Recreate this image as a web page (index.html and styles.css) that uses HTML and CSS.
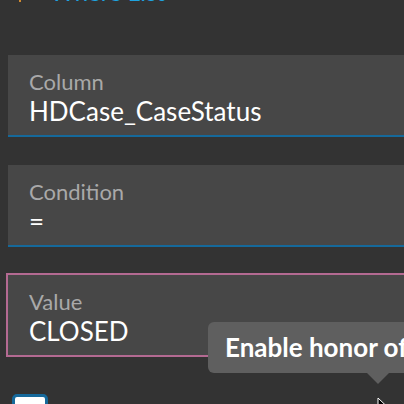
FILE: index.html
```html
<!DOCTYPE html>
<html>
<head>
<meta charset="utf-8">
<link rel="stylesheet" href="styles.css">
</head>
<body>
<div class="page">
  <div class="header">
    <span class="back"></span>
    <span class="title">Where List</span>
  </div>
  <div class="field">
    <div class="label">Column</div>
    <div class="value">HDCase_CaseStatus</div>
  </div>
  <div class="field">
    <div class="label">Condition</div>
    <div class="value">=</div>
  </div>
  <div class="field focused">
    <div class="label">Value</div>
    <div class="value">CLOSED</div>
  </div>
  <div class="check-row">
    <span class="checkbox"></span>
  </div>
</div>
<div class="tooltip">Enable honor of</div>
<svg class="cursor" width="12" height="18" viewBox="0 0 12 18"><path d="M1 1 L1 15 L4.5 11.5 L7 17 L9 16 L6.5 10.5 L11 10.5 Z" fill="#000" stroke="#fff" stroke-width="1"/></svg>
</body>
</html>
```
FILE: styles.css
```css
html, body {
  margin: 0;
  padding: 0;
  background: #333333;
  width: 404px;
  height: 404px;
  overflow: hidden;
  font-family: Lato, "Noto Sans", sans-serif;
}
.page {
  padding-left: 8px;
}
.header {
  height: 55px;
  display: flex;
  align-items: flex-start;
  overflow: hidden;
}
.back {
  width: 2px;
  height: 2px;
  background: #d08a30;
  margin-left: 11px;
}
.title {
  margin-top: -23px;
  margin-left: 29px;
  font-size: 24px;
  line-height: 30px;
  color: #1ea3e0;
}
.field {
  background: #474747;
  height: 82px;
  box-sizing: border-box;
  border-bottom: 2px solid #15699b;
  margin-bottom: 28px;
  padding: 14px 21px 0;
}
.field .label {
  font-size: 22px;
  line-height: 26px;
  color: #a9a9a9;
}
.field .value {
  font-size: 26px;
  line-height: 32px;
  color: #ffffff;
}
.field.focused {
  border-bottom: none;
  outline: 2px solid #b46a92;
  height: 80px;
  margin-top: 0;
}
.check-row {
  margin-top: 39px;
  padding-left: 4px;
}
.checkbox {
  display: block;
  width: 30px;
  height: 30px;
  border: 3px solid #16699b;
  border-radius: 5px;
  background: #ffffff;
}
.tooltip {
  position: absolute;
  left: 208px;
  top: 322px;
  width: 240px;
  height: 51px;
  box-sizing: border-box;
  padding-left: 17px;
  background: #5f5f5f;
  border-radius: 6px;
  color: #ffffff;
  font-weight: bold;
  font-size: 26px;
  line-height: 51px;
  white-space: nowrap;
}
.tooltip::after {
  content: "";
  position: absolute;
  left: 159px;
  top: 51px;
  border-left: 11px solid transparent;
  border-right: 11px solid transparent;
  border-top: 11px solid #5f5f5f;
}
.cursor {
  position: absolute;
  left: 377px;
  top: 397px;
}
```
